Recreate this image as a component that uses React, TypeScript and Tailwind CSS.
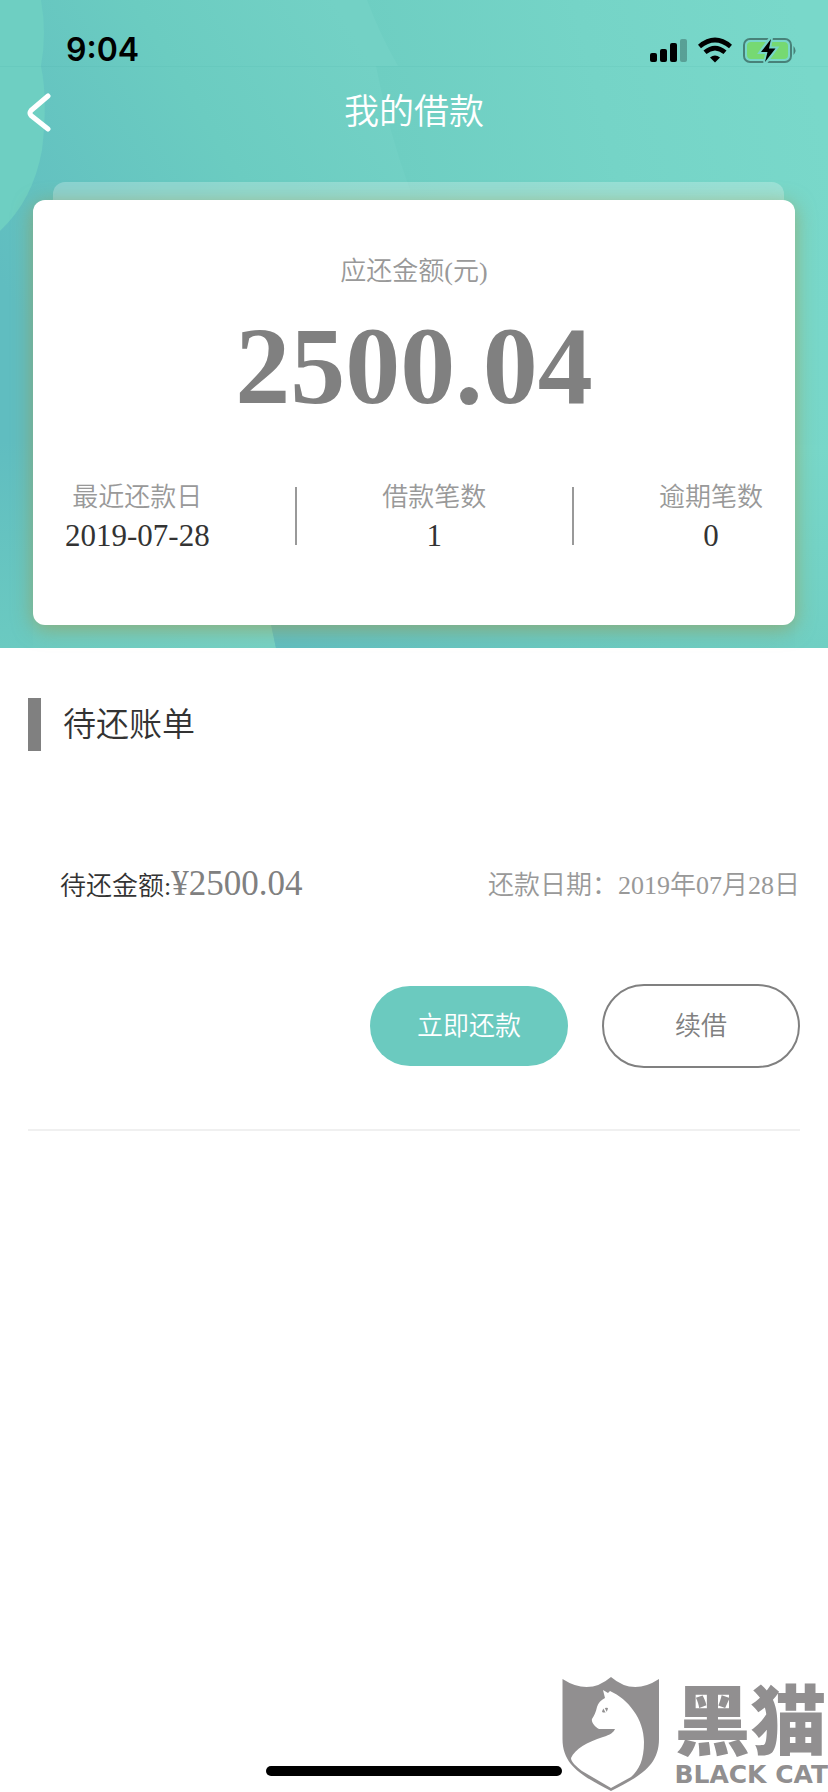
const stats = [
  { label: '最近还款日', value: '2019-07-28' },
  { label: '借款笔数', value: '1' },
  { label: '逾期笔数', value: '0' },
];

const bills = [{ id: 1, amount: '2500.04', date: '2019年07月28日' }];

const HeaderBackground = () => (
  <svg
    className="absolute inset-0 w-full h-full"
    viewBox="0 0 828 648"
    preserveAspectRatio="none"
    aria-hidden="true"
  >
    <defs>
      <linearGradient id="base" x1="0" y1="280" x2="370" y2="60" gradientUnits="userSpaceOnUse">
        <stop offset="0" stopColor="#60bdc0" />
        <stop offset="0.6" stopColor="#6bccc1" />
        <stop offset="1" stopColor="#73d1c5" />
      </linearGradient>
      <linearGradient id="sweep" x1="390" y1="130" x2="800" y2="30" gradientUnits="userSpaceOnUse">
        <stop offset="0" stopColor="#6ecec2" />
        <stop offset="0.5" stopColor="#75d4c7" />
        <stop offset="1" stopColor="#79d8ca" />
      </linearGradient>
      <linearGradient id="leftEdge" x1="0" y1="440" x2="0" y2="648" gradientUnits="userSpaceOnUse">
        <stop offset="0" stopColor="#60bdc0" />
        <stop offset="1" stopColor="#6bcac1" />
      </linearGradient>
      <linearGradient id="rightEdge" x1="0" y1="445" x2="0" y2="648" gradientUnits="userSpaceOnUse">
        <stop offset="0" stopColor="#78d7c9" />
        <stop offset="1" stopColor="#70cfc3" />
      </linearGradient>
      <linearGradient id="bottomLeft" x1="0" y1="0" x2="270" y2="0" gradientUnits="userSpaceOnUse">
        <stop offset="0" stopColor="#6bcac1" />
        <stop offset="1" stopColor="#75d1c5" />
      </linearGradient>
      <linearGradient id="bottomRight" x1="270" y1="0" x2="828" y2="0" gradientUnits="userSpaceOnUse">
        <stop offset="0" stopColor="#60bdc0" />
        <stop offset="0.5" stopColor="#69c8c1" />
        <stop offset="1" stopColor="#70cfc3" />
      </linearGradient>
    </defs>
    <rect width="828" height="648" fill="url(#base)" />
    <path d="M367 0Q380 35 398 66H376Q388 130 410 190V648H828V0Z" fill="url(#sweep)" />
    <path d="M0 0H41Q47 33 41 66Q48 100 42 150Q33 200 0 231Z" fill="#6ecfc2" />
    <rect y="440" width="100" height="208" fill="url(#leftEdge)" />
    <rect x="760" y="445" width="68" height="203" fill="url(#rightEdge)" />
    <path d="M33 610H268L276 648H33Z" fill="url(#bottomLeft)" />
    <path d="M268 610H795V648H276Z" fill="url(#bottomRight)" />
    <path d="M0 66.500H828" stroke="#3aa79b" strokeOpacity="0.1" />
  </svg>
);

const StatusBar = () => (
  <div className="flex items-center justify-between h-[66px] pt-[34px] pl-[66px] pr-[30px]">
    <span className="font-['Inter'] text-[32px] leading-8 font-semibold text-black">9:04</span>
    <svg width="148" height="28" viewBox="0 0 148 28" aria-hidden="true">
      <rect x="0" y="17" width="7" height="9" rx="2" />
      <rect x="10" y="13" width="7" height="13" rx="2" />
      <rect x="20" y="7" width="7" height="19" rx="2" />
      <rect x="30" y="3" width="7" height="23" rx="2" opacity="0.25" />
      <g fill="none" stroke="#000" strokeWidth="4.6">
        <path d="M49.500 10.500Q65 -2.500 80.500 10.500" />
        <path d="M55 16.300Q65 7.800 75 16.300" />
      </g>
      <path d="M60 21.500Q65 17.500 70 21.500L65 26.500Z" />
      <rect x="94" y="3" width="47" height="23" rx="6" fill="none" stroke="#000" strokeOpacity="0.4" strokeWidth="2" />
      <rect x="97" y="6" width="41" height="17" rx="4" fill="#76d972" />
      <path d="M143.500 10Q147.500 14.500 143.500 19Z" opacity="0.4" />
      <path d="M121 2L111 16H117.500L115 27L125.500 12.500H119Z" stroke="#76d5c8" strokeWidth="4" />
      <path d="M121 3L111 16H117.500L115 26L125.500 12.500H119Z" />
    </svg>
  </div>
);

const BlackCatMark = () => (
  <div className="flex items-start gap-[14px] text-[#918f90]">
    <svg width="98" height="116" viewBox="0 0 98 116" aria-hidden="true">
      <path
        d="M0.500 3Q27 20 49 1Q71 20 97 3V63C97 91 76 101 49 115C23 101 0.500 91 0.500 63Z"
        fill="currentColor"
      />
      <path
        d="M41 14L46 17L48 15C66 23 82 43 82 66C82 84 77 94 69 101L49 112L20 95C14 90 9 86 9 82C13 73 25 66 41 61C48 59 52 56 53 53H37C33 51 29 46 30 43C32 40 34 36 35 31C36 27 39 24 43 22Z"
        fill="#fff"
      />
      <path d="M40 36Q41 31 46 32Q45 38 40 36Z" fill="currentColor" />
      <path d="M42 32L44 36" stroke="#fff" strokeWidth="1.500" />
    </svg>
    <div className="flex flex-col gap-[7px]">
      <span className="font-['Noto_Sans_CJK_SC',sans-serif] text-[76px] leading-[80px] font-black">黑猫</span>
      <span className="font-['DejaVu_Sans',sans-serif] text-[25px] leading-6 font-bold whitespace-nowrap">BLACK CAT</span>
    </div>
  </div>
);

export default function App() {
  return (
    <div className="relative flex flex-col min-h-screen bg-white font-['Liberation_Serif','Noto_Sans_CJK_SC',serif]">
      <header className="relative pb-[23px]">
        <HeaderBackground />
        <div className="relative">
          <StatusBar />
          <div className="grid grid-cols-[80px_1fr_80px] items-center h-[92px]">
            <button type="button" aria-label="返回" className="pl-[26px] text-white">
              <svg width="26" height="40" viewBox="0 0 26 40" fill="none" aria-hidden="true">
                <path
                  d="M22 4L5 18.500Q3 21 5 23.500L22 37"
                  stroke="currentColor"
                  strokeWidth="5"
                  strokeLinecap="round"
                  strokeLinejoin="round"
                />
              </svg>
            </button>
            <h1 className="pt-[2px] text-center text-[35px] leading-[48px] font-[350] text-white">我的借款</h1>
          </div>
          <div className="mt-6 ml-[53px] mr-11 h-[18px] rounded-t-xl bg-white/25" />
          <section className="mx-[33px] h-[425px] pt-[52px] rounded-xl bg-white shadow-[0_4px_20px_rgba(160,150,70,0.6)]">
            <p className="text-center text-[26px] leading-10 font-[350] text-[#999]">应还金额(元)</p>
            <p className="mt-[14px] text-center text-[110px] leading-[120px] font-bold text-[#808080]">2500.04</p>
            <dl className="flex items-center justify-between mt-[52px] px-8">
              {stats.map((item, index) => (
                <div key={item.label} className="contents">
                  {index > 0 && <span className="w-[2px] h-[58px] bg-[#999]" />}
                  <div className="text-center">
                    <dt className="text-[26px] leading-10 font-[350] text-[#999]">{item.label}</dt>
                    <dd className="text-[31px] leading-9 text-[#333]">{item.value}</dd>
                  </div>
                </div>
              ))}
            </dl>
          </section>
        </div>
      </header>

      <main className="px-7 pt-[50px]">
        <div className="flex items-center gap-[22px]">
          <span className="w-[13px] h-[53px] bg-[#808080]" />
          <h2 className="text-[33px] leading-[48px] font-[350] text-[#333]">待还账单</h2>
        </div>
        {bills.map((bill) => (
          <article key={bill.id} className="mt-[105px] pb-[61px] border-b-2 border-[#f0f0f0]">
            <div className="flex items-center justify-between pl-8">
              <p className="text-[26px] leading-[56px] font-[350] text-[#333]">
                待还金额:<span className="text-[35px] text-[#808080]">¥{bill.amount}</span>
              </p>
              <p className="text-[26px] leading-[56px] font-[350] text-[#999]">还款日期：{bill.date}</p>
            </div>
            <div className="flex items-center justify-end gap-[34px] mt-[69px]">
              <button type="button" className="w-[198px] h-20 rounded-full bg-[#6bcabf] text-[26px] font-[350] text-white">
                立即还款
              </button>
              <button
                type="button"
                className="w-[198px] h-[84px] rounded-full border-2 border-[#808080] text-[26px] font-[350] text-[#808080]"
              >
                续借
              </button>
            </div>
          </article>
        ))}
      </main>

      <div className="absolute bottom-4 left-1/2 w-[296px] h-[10px] -translate-x-1/2 rounded-full bg-black" />
      <div className="absolute bottom-0 right-0">
        <BlackCatMark />
      </div>
    </div>
  );
}
